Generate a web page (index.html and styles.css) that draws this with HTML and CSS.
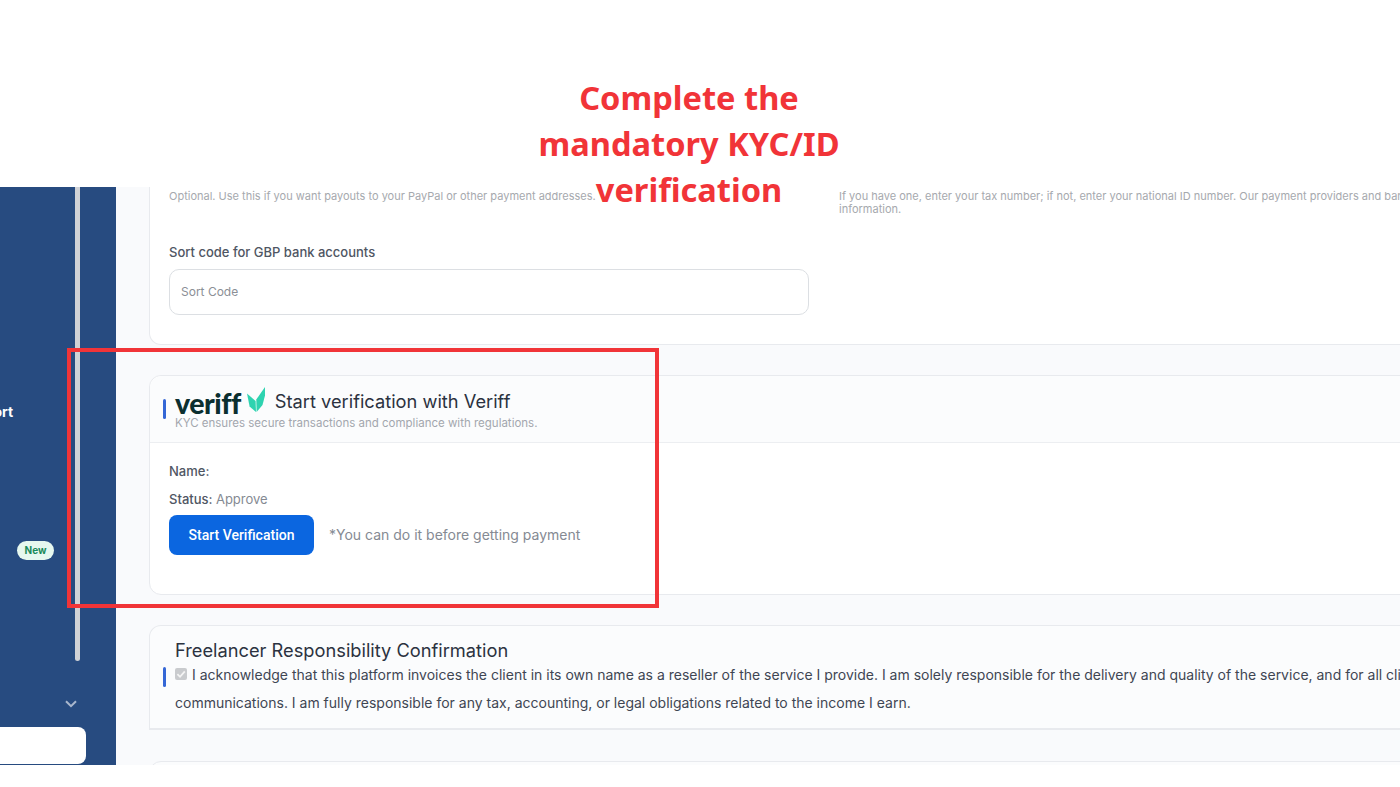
FILE: index.html
```html
<!DOCTYPE html>
<html lang="en">
<head>
<meta charset="utf-8">
<title>KYC verification</title>
<link rel="stylesheet" href="styles.css">
</head>
<body>
<div class="frame">
  <div class="top-band"></div>
  <div class="app">
    <aside class="sidebar">
      <div class="thumb"></div>
      <div class="nav-support">Support</div>
      <div class="nav-new"><span class="badge">New</span></div>
      <svg class="chevron" viewBox="0 0 12 8" width="12" height="8"><path d="M1 1.2 6 6.2 11 1.2" fill="none" stroke="#a9b7cd" stroke-width="2"/></svg>
      <div class="side-button"></div>
    </aside>
    <main class="main">
      <section class="card card-payout">
        <div class="columns">
          <div class="col">
            <p class="help">Optional. Use this if you want payouts to your PayPal or other payment addresses.</p>
            <label class="field-label">Sort code for GBP bank accounts</label>
            <div class="input">Sort Code</div>
          </div>
          <div class="col col-wide">
            <p class="help">If you have one, enter your tax number; if not, enter your national ID number. Our payment providers and banks may require this<br>information.</p>
          </div>
        </div>
      </section>
      <section class="card card-veriff">
        <header class="card-head">
          <span class="mark"></span>
          <div class="head-text">
            <div class="title-row">
              <span class="logo-word">veriff</span>
              <svg class="leaf" viewBox="0 0 18 25" width="18" height="25"><path d="M0 6.5 8.6 14 9 25 2.6 19.6Z" fill="#2ed3b0"/><path d="M9.6 25 9.3 12.6 18 0 18 8.6 15.5 18Z" fill="#2ed3b0"/></svg>
              <h2 class="title">Start verification with Veriff</h2>
            </div>
            <p class="subtitle">KYC ensures secure transactions and compliance with regulations.</p>
          </div>
        </header>
        <div class="card-body">
          <p class="row-name">Name:</p>
          <p class="row-status">Status: <span class="muted">Approve</span></p>
          <div class="action">
            <button class="btn" type="button">Start Verification</button>
            <span class="note">*You can do it before getting payment</span>
          </div>
        </div>
      </section>
      <section class="card card-confirm">
        <span class="mark mark-confirm"></span>
        <div class="confirm-text">
          <h2 class="title confirm-title">Freelancer Responsibility Confirmation</h2>
          <p class="confirm-copy"><span class="check"><svg viewBox="0 0 12 12" width="12" height="12"><path d="M2.4 6.2 5 8.8 9.8 3.4" fill="none" stroke="#f4f4f4" stroke-width="1.8"/></svg></span>I acknowledge that this platform invoices the client in its own name as a reseller of the service I provide. I am solely responsible for the delivery and quality of the service, and for all client<br>communications. I am fully responsible for any tax, accounting, or legal obligations related to the income I earn.</p>
        </div>
      </section>
      <section class="card card-next"></section>
    </main>
  </div>
  <h1 class="headline">Complete the<br>mandatory KYC/ID<br>verification</h1>
  <div class="highlight"></div>
</div>
</body>
</html>
```

FILE: styles.css
```css
* { box-sizing: border-box; }
html, body { margin: 0; padding: 0; background: #fff; }
body { font-family: Inter, "Liberation Sans", sans-serif; }
.frame { position: relative; width: 1400px; height: 787px; overflow: hidden; background: #fff; }
.top-band { height: 187px; }
.app { display: flex; height: 578px; overflow: hidden; }

.sidebar { position: relative; flex: 0 0 116px; background: #274b80; overflow: hidden; }
.thumb { position: absolute; left: 75px; top: 0; width: 5px; height: 474px; background: #d0d2d6; border-radius: 0 0 3px 3px; }
.nav-support { position: absolute; left: -42px; top: 216px; width: 60px; color: #fff; font-size: 14px; font-weight: 700; line-height: 18px; }
.nav-new { position: absolute; left: 17px; top: 354px; }
.badge { display: block; width: 37px; height: 19px; border-radius: 10px; background: #e6f8ef; color: #1a8a5a; font-size: 10px; font-weight: 700; line-height: 19px; text-align: center; }
.chevron { position: absolute; left: 65px; top: 513px; }
.side-button { position: absolute; left: -20px; top: 540px; width: 106px; height: 37px; background: #fff; border-radius: 8px; }

.main { flex: 1 0 0; min-width: 0; background: #f9fafc; padding-left: 33px; }
.card { width: 1300px; background: #fff; border: 1px solid #e8eaee; border-radius: 12px; }
.card-payout { height: 158px; border-top: 0; border-radius: 0 0 12px 12px; padding: 3px 0 0 19px; }
.columns { display: flex; gap: 30px; }
.col { flex: 0 0 640px; }
.col-wide { flex: 0 0 640px; }
.help { margin: 0; font-size: 11px; line-height: 13px; color: #a6a9ae; white-space: nowrap; }
.field-label { display: block; margin-top: 41px; font-size: 13px; font-weight: 500; line-height: 17px; color: #4f5663; }
.input { margin-top: 8px; height: 46px; padding: 0 11px; border: 1px solid #dcdfe3; border-radius: 10px; font-size: 12px; line-height: 44px; color: #8b8f96; background: #fff; }

.card-veriff { height: 220px; margin-top: 30px; }
.card-head { display: flex; align-items: center; height: 67px; border-bottom: 1px solid #eceef1; background: #fbfcfd; border-radius: 12px 12px 0 0; padding-left: 13px; }
.mark { display: block; flex: none; width: 3px; height: 20px; border-radius: 2px; background: #3567d6; }
.head-text { margin-left: 9px; }
.title-row { display: flex; align-items: center; height: 30px; }
.logo-word { font-family: Lato, "Liberation Sans", sans-serif; font-size: 28.5px; font-weight: 900; line-height: 30px; letter-spacing: -0.5px; color: #0b2f30; }
.leaf { margin: -8px 0 0 6px; }
.title { margin: 0; font-size: 18.25px; font-weight: 400; line-height: 24px; color: #2b3240; }
.title-row .title { margin: -5px 0 0 10px; }
.subtitle { margin: -1px 0 0; font-size: 11.5px; line-height: 13px; color: #a3a7ae; }
.card-body { padding: 20px 19px 0; }
.row-name, .row-status { margin: 0; font-size: 13px; font-weight: 500; line-height: 17px; color: #4f5663; }
.row-status { margin-top: 11px; }
.muted { font-weight: 400; color: #858a93; }
.action { display: flex; align-items: center; gap: 15px; margin-top: 7px; }
.btn { width: 145px; height: 40px; border: 0; border-radius: 8px; background: #0b66e0; color: #fff; font-family: Roboto, "Liberation Sans", sans-serif; font-size: 14px; font-weight: 500; }
.note { margin-top: -1px; font-size: 14px; color: #858a93; }

.card-confirm { display: flex; position: relative; height: 105px; margin-top: 30px; background: #fbfcfd; padding: 13px 0 0 25px; border-radius: 12px 12px 0 0; border-width: 1px 1px 2px; }
.mark-confirm { position: absolute; left: 13px; top: 41px; }
.confirm-text { white-space: nowrap; }
.confirm-title { line-height: 22px; }
.confirm-copy { margin: 0; font-size: 14px; line-height: 27.5px; color: #3f4653; }
.check { display: inline-flex; align-items: center; justify-content: center; width: 12px; height: 12px; margin-right: 5px; border-radius: 2px; background: #c9cbce; vertical-align: 0; }
.card-next { height: 40px; margin-top: 31px; background: #fbfcfd; }

.headline { position: absolute; left: 489px; top: 75px; width: 400px; margin: 0; font-family: "Noto Sans", "Liberation Sans", sans-serif; font-size: 32.6px; font-weight: 700; line-height: 46px; text-align: center; color: #f13438; }
.highlight { position: absolute; left: 67px; top: 348px; width: 592px; height: 260px; border: 4px solid #f13438; }
```
